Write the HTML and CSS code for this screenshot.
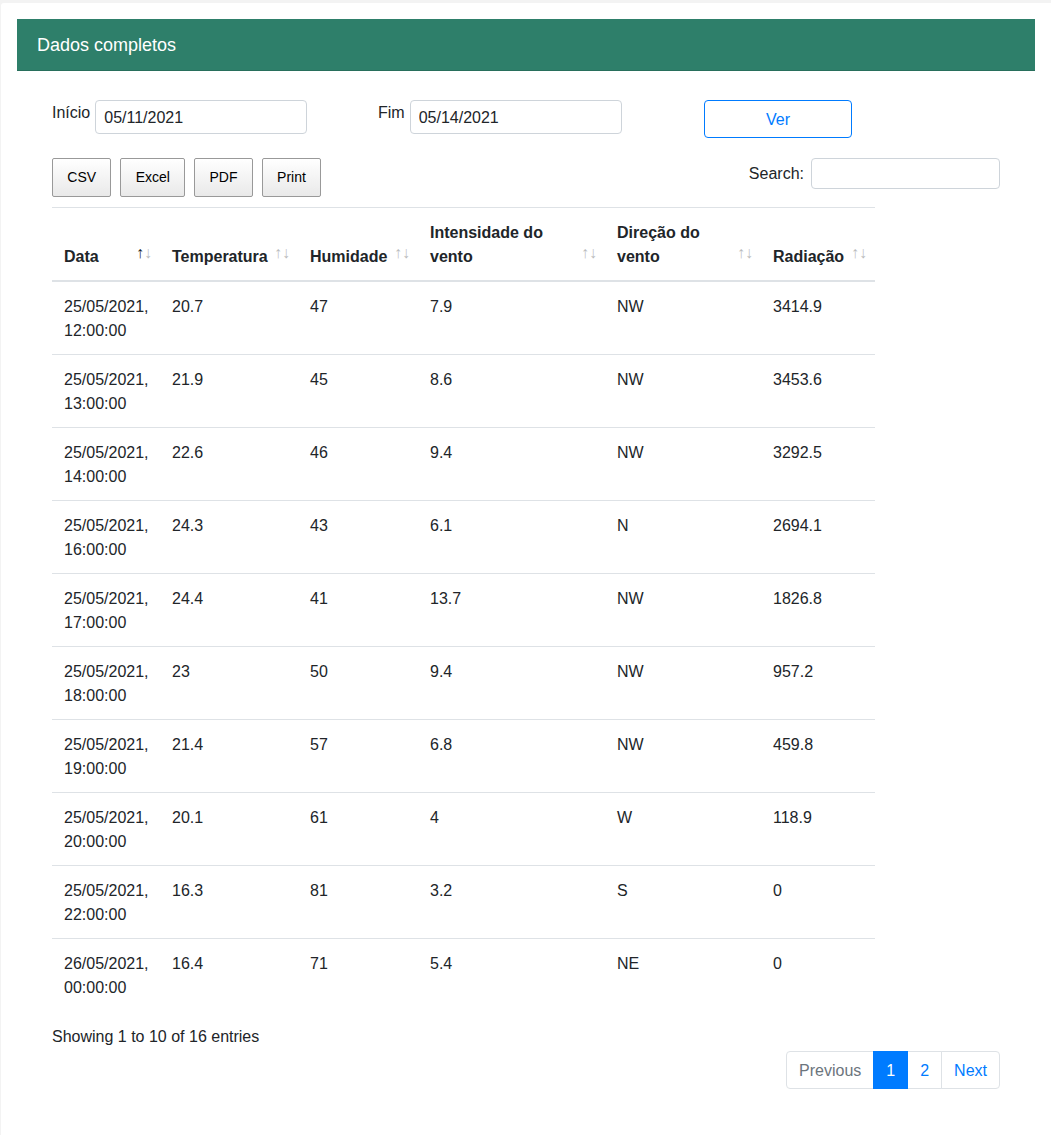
FILE: index.html
```html
<!DOCTYPE html>
<html lang="pt">
<head>
<meta charset="utf-8">
<title>Dados completos</title>
<link rel="stylesheet" href="styles.css">
</head>
<body>
<div class="page">
  <div class="card">
    <div class="card-header">Dados completos</div>
    <div class="card-body">
      <div class="range-row">
        <div class="field">
          <label class="field-label">Início</label>
          <input class="date-input" type="text" value="05/11/2021">
        </div>
        <div class="field field-end">
          <label class="field-label">Fim</label>
          <input class="date-input" type="text" value="05/14/2021">
        </div>
        <button class="btn-ver">Ver</button>
      </div>

      <div class="tools-row">
        <div class="export-buttons">
          <button class="dt-button">CSV</button>
          <button class="dt-button">Excel</button>
          <button class="dt-button">PDF</button>
          <button class="dt-button">Print</button>
        </div>
        <label class="search">Search:<input class="search-input" type="search"></label>
      </div>

      <table class="data-table">
        <colgroup>
          <col class="c-data"><col class="c-temp"><col class="c-hum"><col class="c-int"><col class="c-dir"><col class="c-rad">
        </colgroup>
        <thead>
          <tr>
            <th class="sort sort-asc">Data</th>
            <th class="sort">Temperatura</th>
            <th class="sort">Humidade</th>
            <th class="sort">Intensidade do vento</th>
            <th class="sort">Direção do vento</th>
            <th class="sort nowrap">Radiação</th>
          </tr>
        </thead>
        <tbody>
          <tr><td>25/05/2021, 12:00:00</td><td>20.7</td><td>47</td><td>7.9</td><td>NW</td><td>3414.9</td></tr>
          <tr><td>25/05/2021, 13:00:00</td><td>21.9</td><td>45</td><td>8.6</td><td>NW</td><td>3453.6</td></tr>
          <tr><td>25/05/2021, 14:00:00</td><td>22.6</td><td>46</td><td>9.4</td><td>NW</td><td>3292.5</td></tr>
          <tr><td>25/05/2021, 16:00:00</td><td>24.3</td><td>43</td><td>6.1</td><td>N</td><td>2694.1</td></tr>
          <tr><td>25/05/2021, 17:00:00</td><td>24.4</td><td>41</td><td>13.7</td><td>NW</td><td>1826.8</td></tr>
          <tr><td>25/05/2021, 18:00:00</td><td>23</td><td>50</td><td>9.4</td><td>NW</td><td>957.2</td></tr>
          <tr><td>25/05/2021, 19:00:00</td><td>21.4</td><td>57</td><td>6.8</td><td>NW</td><td>459.8</td></tr>
          <tr><td>25/05/2021, 20:00:00</td><td>20.1</td><td>61</td><td>4</td><td>W</td><td>118.9</td></tr>
          <tr><td>25/05/2021, 22:00:00</td><td>16.3</td><td>81</td><td>3.2</td><td>S</td><td>0</td></tr>
          <tr><td>26/05/2021, 00:00:00</td><td>16.4</td><td>71</td><td>5.4</td><td>NE</td><td>0</td></tr>
        </tbody>
      </table>

      <div class="info">Showing 1 to 10 of 16 entries</div>
      <div class="pager-row">
        <ul class="pagination">
          <li class="page-item disabled"><span class="page-link">Previous</span></li>
          <li class="page-item active"><span class="page-link">1</span></li>
          <li class="page-item"><span class="page-link">2</span></li>
          <li class="page-item"><span class="page-link">Next</span></li>
        </ul>
      </div>
    </div>
  </div>
</div>
</body>
</html>
```

FILE: styles.css
```css
* { box-sizing: border-box; }

html, body {
  margin: 0;
  padding: 0;
}

body {
  background: #f3f3f3;
  font-family: "Liberation Sans", Arial, sans-serif;
  font-size: 16px;
  line-height: 1.5;
  color: #212529;
  padding: 3px 0 0 1px;
}

.page {
  background: #ffffff;
  border-top-left-radius: 3px;
  padding: 16px 16px 0 16px;
  min-height: 1132px;
}

.card-header {
  background: #2e7f6a;
  color: #ffffff;
  font-size: 18px;
  line-height: 27px;
  padding: 13px 20px 11px 20px;
  border-bottom: 1px solid rgba(0, 0, 0, 0.125);
}

.card-body {
  padding: 29px 35px 40px 35px;
}

/* date range row */
.range-row {
  display: grid;
  grid-template-columns: 326px 326px 148px;
  align-items: start;
}

.field {
  display: flex;
  align-items: flex-start;
  gap: 5px;
}

.field-label {
  line-height: 24px;
  padding-top: 1px;
}

.date-input {
  width: 212px;
  height: 34px;
  padding: 5px 8px 3px 8px;
  font-family: inherit;
  font-size: 16px;
  color: #212529;
  border: 1px solid #ced4da;
  border-radius: 4px;
  background: #fff;
}

.btn-ver {
  width: 148px;
  height: 38px;
  font-family: inherit;
  font-size: 16px;
  color: #007bff;
  background: #fff;
  border: 1px solid #007bff;
  border-radius: 4px;
  padding: 2px 0 0 0;
}

/* tools row */
.tools-row {
  display: flex;
  justify-content: space-between;
  align-items: flex-start;
  margin-top: 20px;
}

.export-buttons {
  display: flex;
  gap: 9px;
}

.dt-button {
  font-family: inherit;
  font-size: 14px;
  line-height: 23px;
  padding: 7px 14.3px;
  color: #000;
  border: 1px solid #999;
  border-radius: 2px;
  background: linear-gradient(to bottom, #ffffff 0%, #e9e9e9 100%);
}

.search {
  display: flex;
  align-items: center;
  gap: 7px;
  height: 31px;
}

.search-input {
  width: 189px;
  height: 31px;
  border: 1px solid #ced4da;
  border-radius: 4px;
  padding: 4px 8px;
  font-family: inherit;
  font-size: 14px;
}

/* table */
.data-table {
  margin-top: 10px;
  width: 823px;
  table-layout: fixed;
  border-collapse: collapse;
}

.c-data { width: 108px; }
.c-temp { width: 138px; }
.c-hum { width: 120px; }
.c-int { width: 187px; }
.c-dir { width: 156px; }
.c-rad { width: 114px; }

.data-table th {
  position: relative;
  text-align: left;
  vertical-align: bottom;
  font-weight: bold;
  padding: 13px 30px 11px 12px;
  border-top: 1px solid #dee2e6;
  border-bottom: 2px solid #dee2e6;
}

.data-table th.nowrap { white-space: nowrap; }

.sort::before,
.sort::after {
  position: absolute;
  bottom: 15px;
  line-height: 24px;
  opacity: 0.3;
  font-size: 16px;
  color: #212529;
}

.sort::before {
  content: "\2191";
  right: 16px;
}

.sort::after {
  content: "\2193";
  right: 8px;
}

.sort-asc::before { opacity: 1; }

.data-table td {
  vertical-align: top;
  padding: 13px 12px 11px 12px;
  border-top: 1px solid #dee2e6;
}

.data-table tbody tr:first-child td { border-top: none; }

/* footer */
.info {
  margin-top: 14px;
  line-height: 24px;
}

.pager-row {
  display: flex;
  justify-content: flex-end;
  margin-top: 2px;
}

.pagination {
  display: flex;
  list-style: none;
  margin: 0;
  padding: 0;
}

.page-link {
  display: block;
  padding: 7px 12px 5px 12px;
  line-height: 24px;
  color: #007bff;
  background: #fff;
  border: 1px solid #dee2e6;
  margin-left: -1px;
}

.page-item:first-child .page-link {
  margin-left: 0;
  border-radius: 4px 0 0 4px;
}

.page-item:last-child .page-link {
  border-radius: 0 4px 4px 0;
}

.page-item.disabled .page-link { color: #6c757d; }

.page-item.active .page-link {
  position: relative;
  z-index: 1;
  color: #fff;
  background: #007bff;
  border-color: #007bff;
}
```
